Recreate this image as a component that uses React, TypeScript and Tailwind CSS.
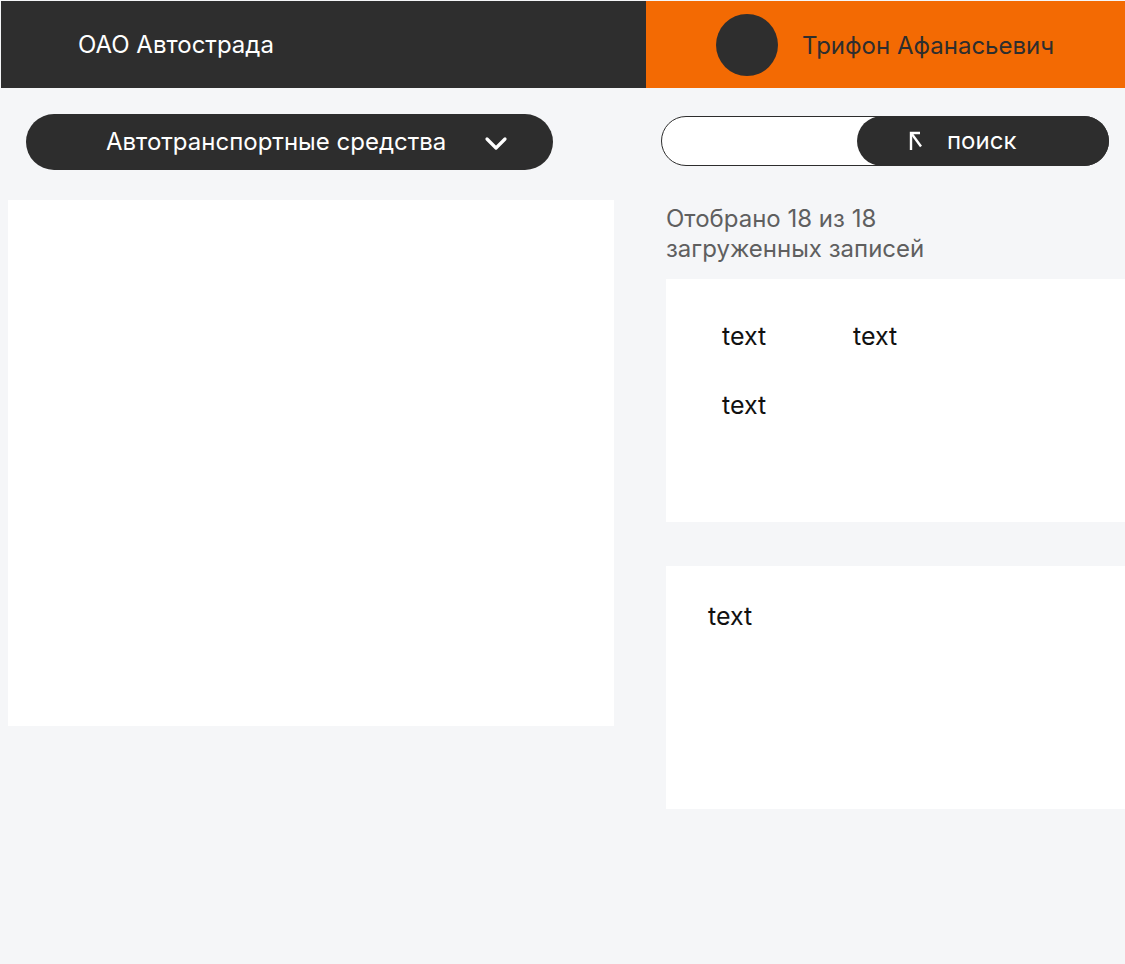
import React from 'react';

function ChevronDown() {
  return (
    <svg width="24" height="16" viewBox="0 0 24 16" fill="none">
      <polyline points="3,3 12,12 21,3" stroke="white" strokeWidth="3.2" strokeLinecap="round" strokeLinejoin="round" />
    </svg>
  );
}

function ArrowUpLeft() {
  return (
    <svg width="14" height="20" viewBox="0 0 14 20" fill="none">
      <path d="M2 19V2h9" stroke="white" strokeWidth="2.4" strokeLinejoin="miter" />
      <path d="M2.5 2.5l9.5 13" stroke="white" strokeWidth="2.4" />
    </svg>
  );
}

export default function App() {
  return (
    <div className="min-h-[964px] bg-[#f5f6f8] pt-px pl-px" style={{ fontFamily: 'Inter, "Noto Sans", sans-serif' }}>
      {/* header */}
      <header className="flex h-[87px]">
        <div className="flex w-[645px] items-center bg-[#2e2e2e] pl-[77px]">
          <span className="text-[24px] text-white">ОАО Автострада</span>
        </div>
        <div className="flex flex-1 items-center bg-[#f36a03] pl-[70px]">
          <div className="h-[62px] w-[62px] rounded-full bg-[#2e2e2e]" />
          <span className="ml-[24px] mt-[2px] text-[24px] text-[#2e2e2e]">Трифон Афанасьевич</span>
        </div>
      </header>

      <main className="flex">
        {/* left column */}
        <div className="w-[645px]">
          <button className="ml-[25px] mt-[26px] flex h-[56px] w-[527px] items-center rounded-full bg-[#2d2d2d] pl-[80px]">
            <span className="text-[24px] text-white">Автотранспортные средства</span>
            <span className="ml-[38px] mt-[3px]">
              <ChevronDown />
            </span>
          </button>
          <div className="ml-[7px] mt-[30px] h-[526px] w-[606px] bg-white" />
        </div>

        {/* right column */}
        <div className="flex-1">
          <div className="ml-[15px] mt-[28px] flex h-[50px] w-[448px] justify-end rounded-full border border-[#2d2d2d] bg-white">
            <button className="-m-px flex h-[50px] w-[252px] items-center rounded-full bg-[#2d2d2d] pl-[52px]">
              <ArrowUpLeft />
              <span className="ml-[24px] text-[24px] text-white">поиск</span>
            </button>
          </div>

          <p className="ml-[20px] mt-[38px] text-[24px] leading-[30px] text-[#5f5f5f]">
            Отобрано 18 из 18
            <br />
            загруженных записей
          </p>

          <div className="ml-[20px] mt-[15px] h-[243px] bg-white pl-[56px] pt-[42px] text-[25px] leading-[30px] text-[#111]">
            <div className="grid grid-cols-[131px_auto] gap-y-[39px]">
              <span>text</span>
              <span>text</span>
              <span>text</span>
            </div>
          </div>

          <div className="ml-[20px] mt-[44px] h-[243px] bg-white pl-[42px] pt-[35px] text-[25px] leading-[30px] text-[#111]">
            <span>text</span>
          </div>
        </div>
      </main>
    </div>
  );
}
